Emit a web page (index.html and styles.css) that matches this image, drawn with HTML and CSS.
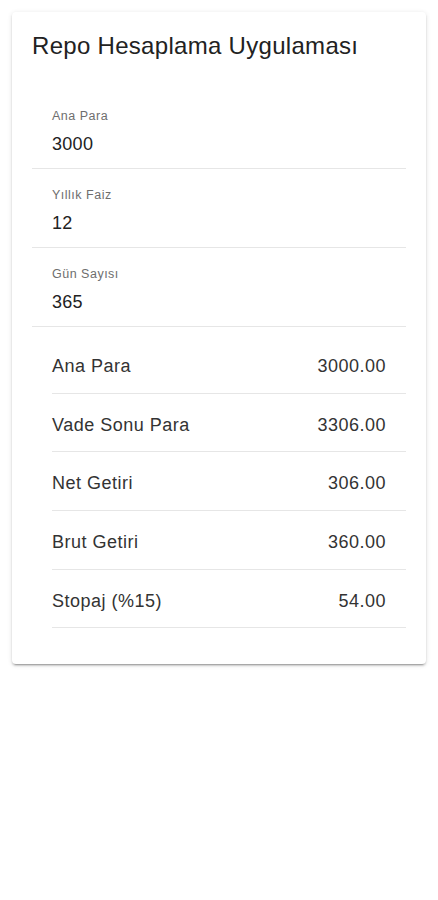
FILE: index.html
```html
<!DOCTYPE html>
<html lang="tr">
<head>
    <meta charset="UTF-8">
    <meta name="viewport" content="width=device-width, initial-scale=1.0">
    <title>Repo Hesaplama Uygulaması</title>
    <link rel="stylesheet" href="styles.css">
</head>
<body>
    <div class="card">
        <h1 class="card-title">Repo Hesaplama Uygulaması</h1>

        <div class="fields">
            <div class="field">
                <label for="anaPara">Ana Para</label>
                <input type="text" id="anaPara" value="3000">
            </div>
            <div class="field">
                <label for="faiz">Yıllık Faiz</label>
                <input type="text" id="faiz" value="12">
            </div>
            <div class="field">
                <label for="gun">Gün Sayısı</label>
                <input type="text" id="gun" value="365">
            </div>
        </div>

        <div class="results">
            <div class="row"><span>Ana Para</span><span>3000.00</span></div>
            <div class="row"><span>Vade Sonu Para</span><span>3306.00</span></div>
            <div class="row"><span>Net Getiri</span><span>306.00</span></div>
            <div class="row"><span>Brut Getiri</span><span>360.00</span></div>
            <div class="row"><span>Stopaj (%15)</span><span>54.00</span></div>
        </div>
    </div>
</body>
</html>
```

FILE: styles.css
```css
body {
    font-family: 'Liberation Sans', Arial, sans-serif;
    margin: 0;
    background-color: #fff;
    color: #222;
}
.card {
    margin: 12px;
    padding: 20px 20px 36px;
    border-radius: 4px;
    background-color: #fff;
    box-shadow: 0 3px 1px -2px rgba(0,0,0,0.2), 0 2px 2px 0 rgba(0,0,0,0.14), 0 1px 5px 0 rgba(0,0,0,0.12);
}
.card-title {
    margin: 0 0 30px;
    font-size: 24px;
    font-weight: normal;
    line-height: 28px;
    letter-spacing: 0.3px;
    color: #222;
}
.field {
    display: flex;
    flex-direction: column;
    gap: 8px;
    padding: 18px 20px 12px;
    border-bottom: 1px solid #e6e6e6;
}
.field label {
    font-size: 12.5px;
    line-height: 16px;
    letter-spacing: 0.5px;
    color: #6e6e6e;
}
.field input {
    border: none;
    outline: none;
    padding: 0;
    margin: 0;
    font-family: inherit;
    font-size: 18px;
    line-height: 24px;
    height: 24px;
    letter-spacing: 0.3px;
    color: #222;
    background: transparent;
}
.results {
    margin-top: 8px;
}
.row {
    display: flex;
    justify-content: space-between;
    margin-left: 20px;
    padding: 19px 20px 14.7px 0;
    border-bottom: 1px solid #e6e6e6;
    font-size: 18px;
    line-height: 24px;
    letter-spacing: 0.5px;
    color: #333;
}
```
